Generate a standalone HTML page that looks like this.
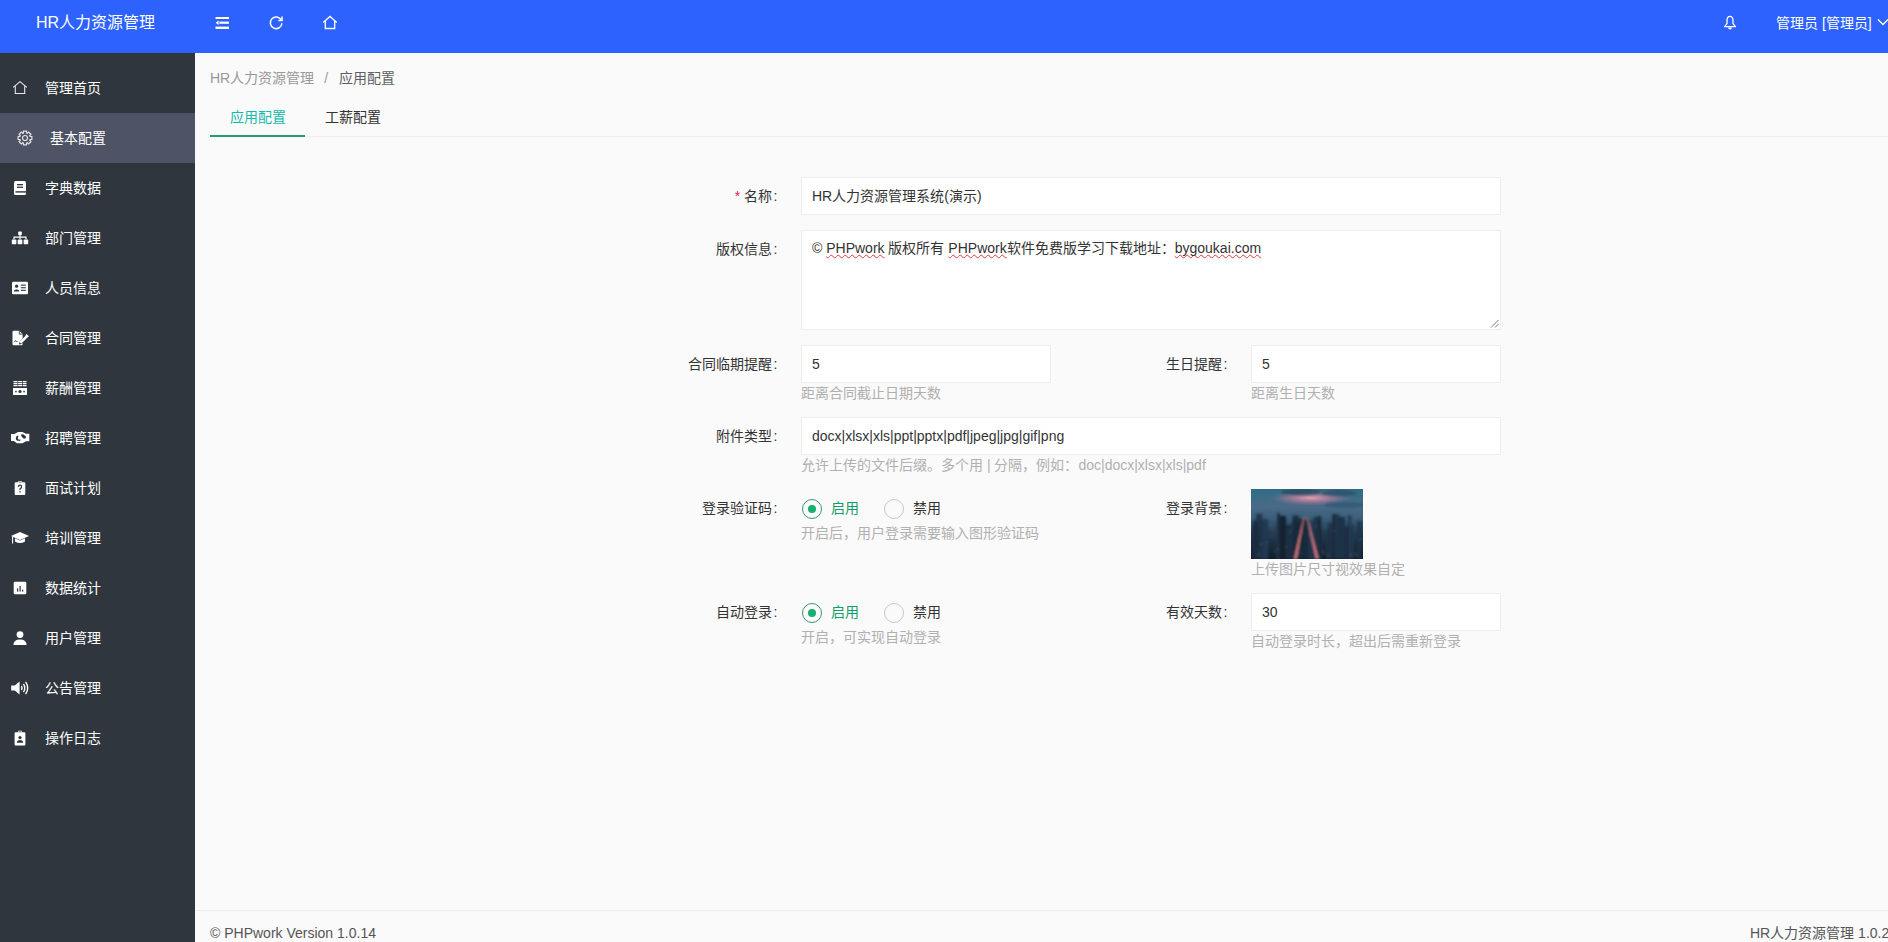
<!DOCTYPE html>
<html lang="zh-CN"><head><meta charset="utf-8">
<style>
*{margin:0;padding:0;box-sizing:border-box}
html,body{width:1888px;height:942px;overflow:hidden;background:#fafafa;font-family:"Liberation Sans",sans-serif;font-size:14px;color:#333}
.abs{position:absolute}
#hdr{position:absolute;left:0;top:0;width:1888px;height:53px;background:#2d62ff}
#logo{position:absolute;left:-2px;top:0;width:195px;height:45px;line-height:45px;text-align:center;color:#fff;font-size:16px}
#side{position:absolute;left:0;top:53px;width:195px;height:889px;background:#2f363e}
.mi{position:absolute;left:0;width:195px;height:50px;line-height:50px;color:#fff;font-size:14px}
.mi .t{position:absolute;left:45px;top:0}
.mi svg{position:absolute;left:10px;top:15px}
.mi.on{background:#4e5366}
.mi.on .t{left:50px}
.mi.on svg{left:15px}
#main{position:absolute;left:195px;top:53px;width:1693px;height:889px;background:#fafafa}
.lbl{position:absolute;text-align:right;width:200px;color:#333;line-height:20px;white-space:nowrap}
.c{display:inline-block;width:14px;text-align:left;padding-left:1.6px;font-style:normal}
.inp{position:absolute;background:#fff;border:1px solid #eee;border-radius:0;line-height:36px;padding-left:10px;color:#333}
.aux{position:absolute;color:#b0b0b0;line-height:20px;white-space:nowrap}
.radio{position:absolute;width:20px;height:20px;border-radius:50%;border:1.5px solid #c6c6c6;margin-top:1px}
.radio.on{border-color:#3e9474}
.radio.on:after{content:"";position:absolute;left:5.2px;top:4.6px;width:8px;height:8px;border-radius:50%;background:#16b070}
.sp{text-decoration:underline wavy #e8393a;text-decoration-thickness:1.4px;text-underline-offset:1px;text-decoration-skip-ink:none}
.rt{position:absolute;line-height:20px;color:#333}
.rt.on{color:#129e68}
</style></head>
<body>
<div id="hdr">
  <div id="logo">HR人力资源管理</div>
  <svg class="abs" style="left:215px;top:16px" width="15" height="14" viewBox="0 0 15 14">
    <rect x="0.5" y="1" width="13.5" height="2" fill="#fff"/>
    <rect x="4.4" y="5.6" width="9.6" height="2.2" fill="#fff"/>
    <path d="M0.6 6.7 L3.6 4.4 L3.6 9Z" fill="#fff"/>
    <rect x="0.5" y="10.6" width="13.5" height="2.4" fill="#fff"/>
  </svg>
  <svg class="abs" style="left:268px;top:15px" width="16" height="16" viewBox="0 0 16 16">
    <path d="M13.3 5.2 A5.8 5.8 0 1 0 13.9 8.2" fill="none" stroke="#fff" stroke-width="1.5"/>
    <path d="M10.4 5.4 L14 5.4 L14 1.6" fill="none" stroke="#fff" stroke-width="1.5"/>
  </svg>
  <svg class="abs" style="left:322px;top:15px" width="16" height="16" viewBox="0 0 16 16">
    <path d="M1.2 7.4 L8 1.4 L14.8 7.4" fill="none" stroke="#fff" stroke-width="1.3"/>
    <path d="M3.3 6 L3.3 13.5 L12.7 13.5 L12.7 6" fill="none" stroke="#fff" stroke-width="1.3"/>
  </svg>
  <svg class="abs" style="left:1722px;top:14px" width="16" height="17" viewBox="0 0 16 17">
    <path d="M8 2.4 C6.1 2.4 5 4.2 5 6.6 L5 9.6 L2.6 12.6 L13.4 12.6 L11 9.6 L11 6.6 C11 4.2 9.9 2.4 8 2.4Z" fill="none" stroke="#fff" stroke-width="1.35" stroke-linejoin="round"/>
    <path d="M6.1 13.5 A1.9 1.9 0 0 0 9.9 13.5Z" fill="#fff"/>
  </svg>
  <div class="abs" style="left:1776px;top:13px;line-height:20px;color:#fff;white-space:nowrap">管理员 [管理员]</div>
  <svg class="abs" style="left:1877px;top:17px" width="12" height="10" viewBox="0 0 12 10">
    <path d="M1 2.5 L6 7.5 L11 2.5" fill="none" stroke="#fff" stroke-width="1.3"/>
  </svg>
</div>

<div id="side">
  <div class="mi" style="top:10px"><svg width="20" height="20" viewBox="0 0 20 20"><path d="M3.2 9.4 L10 3.6 L16.8 9.4 M5.3 7.6 V15.5 H14.7 V7.6" fill="none" stroke="#e6e6e6" stroke-width="1.1"/></svg><span class="t">管理首页</span></div>
  <div class="mi on" style="top:60px"><svg width="20" height="20" viewBox="0 0 20 20"><path d="M15.04 8.36 L16.84 8.50 L16.84 11.50 L15.04 11.64 L14.72 12.41 L15.90 13.77 L13.77 15.90 L12.41 14.72 L11.64 15.04 L11.50 16.84 L8.50 16.84 L8.36 15.04 L7.59 14.72 L6.23 15.90 L4.10 13.77 L5.28 12.41 L4.96 11.64 L3.16 11.50 L3.16 8.50 L4.96 8.36 L5.28 7.59 L4.10 6.23 L6.23 4.10 L7.59 5.28 L8.36 4.96 L8.50 3.16 L11.50 3.16 L11.64 4.96 L12.41 5.28 L13.77 4.10 L15.90 6.23 L14.72 7.59Z" fill="none" stroke="#e0e0e0" stroke-width="1.25"/><circle cx="10" cy="10" r="2.5" fill="none" stroke="#e0e0e0" stroke-width="1.2"/></svg><span class="t">基本配置</span></div>
  <div class="mi" style="top:110px"><svg width="20" height="20" viewBox="0 0 20 20"><rect x="4" y="3" width="12" height="14" rx="1.5" fill="#fff"/><rect x="7" y="6" width="6" height="1.3" fill="#2f363e"/><rect x="7" y="8.6" width="6" height="1.3" fill="#2f363e"/><rect x="5.5" y="13.2" width="10.5" height="1.4" fill="#2f363e"/></svg><span class="t">字典数据</span></div>
  <div class="mi" style="top:160px"><svg width="20" height="20" viewBox="0 0 20 20"><rect x="8.2" y="3.6" width="3.6" height="3.4" rx="0.6" fill="#fff"/><path d="M10 7 V9.2 M4 11.2 V9.2 H16 V11.2 M10 9.2 V11.2" stroke="#fff" stroke-width="1.2" fill="none"/><rect x="1.8" y="11.6" width="4.6" height="4.6" rx="0.8" fill="#fff"/><rect x="7.7" y="11.6" width="4.6" height="4.6" rx="0.8" fill="#fff"/><rect x="13.6" y="11.6" width="4.6" height="4.6" rx="0.8" fill="#fff"/></svg><span class="t">部门管理</span></div>
  <div class="mi" style="top:210px"><svg width="20" height="20" viewBox="0 0 20 20"><rect x="2" y="3.8" width="16" height="12.4" rx="1.2" fill="#fff"/><circle cx="6.6" cy="8.2" r="1.6" fill="#2f363e"/><path d="M3.9 13.4 C4.2 11 9 11 9.3 13.4Z" fill="#2f363e"/><rect x="10.8" y="6.6" width="5" height="1.1" fill="#2f363e"/><rect x="10.8" y="9.2" width="5" height="1.1" fill="#2f363e"/><rect x="10.8" y="11.8" width="5" height="1.1" fill="#2f363e"/></svg><span class="t">人员信息</span></div>
  <div class="mi" style="top:260px"><svg width="20" height="20" viewBox="0 0 20 20"><path d="M2.5 4 Q2.5 2.8 3.7 2.8 L9.3 2.8 L12.6 6.1 L12.6 10.5 L9.5 14 L9 16.5 L11.5 16 L12.6 15 L12.6 16.2 Q12.6 17.3 11.5 17.3 L3.7 17.3 Q2.5 17.3 2.5 16.1Z" fill="#fff"/><path d="M9.3 2.8 V6.1 H12.6" fill="none" stroke="#2f363e" stroke-width="0.9"/><path d="M4.2 14.2 L5.6 12.5 L6.6 14 L7.6 13" fill="none" stroke="#2f363e" stroke-width="0.8"/><path d="M10.3 14.8 L17 8.1" stroke="#fff" stroke-width="2.6"/><path d="M16 6.6 L18.3 8.9" stroke="#fff" stroke-width="1.6"/></svg><span class="t">合同管理</span></div>
  <div class="mi" style="top:310px"><svg width="20" height="20" viewBox="0 0 20 20"><path d="M3.5 3.6 H7.5 M8.2 3.6 H12 M12.7 3.6 H16.5 M3.5 5.6 H7.5 M8.2 5.6 H12 M12.7 5.6 H16.5 M3.5 7.6 H7.5 M8.2 7.6 H12 M12.7 7.6 H16.5" stroke="#fff" stroke-width="1.3"/><rect x="3" y="10" width="14" height="7" fill="#fff"/><circle cx="10" cy="13.5" r="1.6" fill="#2f363e"/><rect x="5.2" y="12.8" width="1.5" height="1.5" fill="#2f363e"/><rect x="13.3" y="12.8" width="1.5" height="1.5" fill="#2f363e"/></svg><span class="t">薪酬管理</span></div>
  <div class="mi" style="top:360px"><svg width="20" height="20" viewBox="0 0 20 20"><path d="M1 6 L4.4 6 L8 4 L12.4 4 L16 5.7 L19.3 5.7 L19.3 13.2 L16 13.2 L12.5 15.2 L7 15.2 L3.8 13 L1 13Z" fill="#fff"/><path d="M7.2 7.4 Q4.6 10.2 6.8 12.6 L9.6 13 L11 11.8 L8.4 11.4 Q7 10.2 8.6 8.4Z" fill="#2f363e"/><path d="M11 6.4 L13.2 6.2 L16 8.4 L15.4 10.8 L13.4 10.4 L11.2 8Z" fill="#2f363e"/></svg><span class="t">招聘管理</span></div>
  <div class="mi" style="top:410px"><svg width="20" height="20" viewBox="0 0 20 20"><path d="M5.8 4.2 H8.3 V3 H11.7 V4.2 H14.2 Q15.3 4.2 15.3 5.3 V16 Q15.3 17.1 14.2 17.1 H5.8 Q4.7 17.1 4.7 16 V5.3 Q4.7 4.2 5.8 4.2Z" fill="#fff"/><rect x="9.2" y="3.6" width="1.6" height="1" fill="#2f363e"/><path d="M8.4 9 Q8.4 7.2 10 7.2 Q11.6 7.2 11.6 8.8 Q11.6 10 10 10.8 V12" fill="none" stroke="#2f363e" stroke-width="1.2"/><rect x="9.4" y="13.2" width="1.3" height="1.3" fill="#2f363e"/></svg><span class="t">面试计划</span></div>
  <div class="mi" style="top:460px"><svg width="20" height="20" viewBox="0 0 20 20"><path d="M1 8 L10 4 L19 8 L10 12Z" fill="#fff"/><path d="M5 10.2 V13.6 Q10 16.6 15 13.6 V10.2 L10 12.4Z" fill="#fff"/><path d="M2.6 8.6 V15.6" stroke="#fff" stroke-width="1.1"/></svg><span class="t">培训管理</span></div>
  <div class="mi" style="top:510px"><svg width="20" height="20" viewBox="0 0 20 20"><rect x="3.7" y="3.7" width="12.6" height="12.6" rx="1.3" fill="#fff"/><rect x="7" y="10.4" width="1.2" height="3.2" fill="#2f363e"/><rect x="9.5" y="8" width="1.2" height="5.6" fill="#2f363e"/><rect x="12" y="11.6" width="1.2" height="2" fill="#2f363e"/></svg><span class="t">数据统计</span></div>
  <div class="mi" style="top:560px"><svg width="20" height="20" viewBox="0 0 20 20"><circle cx="10" cy="6.6" r="3.4" fill="#fff"/><path d="M3.4 17 Q3.4 11.4 10 11.4 Q16.6 11.4 16.6 17Z" fill="#fff"/></svg><span class="t">用户管理</span></div>
  <div class="mi" style="top:610px"><svg width="20" height="20" viewBox="0 0 20 20"><path d="M1.2 7.6 H4.8 L9.6 3.6 V16.4 L4.8 12.4 H1.2Z" fill="#fff"/><path d="M11.4 8 Q12.8 10 11.4 12" fill="none" stroke="#fff" stroke-width="1.4"/><path d="M13.4 5.8 Q16.2 10 13.4 14.2" fill="none" stroke="#fff" stroke-width="1.4"/><path d="M15.6 3.8 Q19.8 10 15.6 16.2" fill="none" stroke="#fff" stroke-width="1.4"/></svg><span class="t">公告管理</span></div>
  <div class="mi" style="top:660px"><svg width="20" height="20" viewBox="0 0 20 20"><path d="M5.8 4.2 H8.3 V2.8 H11.7 V4.2 H14.2 Q15.4 4.2 15.4 5.4 V16.4 Q15.4 17.6 14.2 17.6 H5.8 Q4.6 17.6 4.6 16.4 V5.4 Q4.6 4.2 5.8 4.2Z" fill="#fff"/><rect x="9.2" y="3.4" width="1.6" height="1" fill="#2f363e"/><circle cx="10" cy="9.6" r="1.6" fill="#2f363e"/><path d="M6.8 14.8 Q7 12 10 12 Q13 12 13.2 14.8Z" fill="#2f363e"/></svg><span class="t">操作日志</span></div>
</div>

<!-- main content uses page coordinates -->
<div class="abs" style="left:210px;top:68px;line-height:20px;white-space:nowrap"><span style="color:#999">HR人力资源管理</span><span style="color:#999;margin:0 11px 0 10px">/</span><span style="color:#5f5f5f">应用配置</span></div>
<div class="abs" style="left:210px;top:136px;width:1678px;height:1px;background:#eee"></div>
<div class="abs" style="left:230px;top:107px;line-height:20px;color:#16baaa">应用配置</div>
<div class="abs" style="left:325px;top:107px;line-height:20px;color:#333">工薪配置</div>
<div class="abs" style="left:210px;top:135px;width:95px;height:2px;background:#289c70"></div>

<div class="lbl" style="left:586px;top:186px"><span style="color:#dd2244">*</span> 名称<i class="c">:</i></div>
<div class="inp" style="left:801px;top:177px;width:700px;height:38px">HR人力资源管理系统(演示)</div>

<div class="lbl" style="left:586px;top:239px">版权信息<i class="c">:</i></div>
<div class="inp" style="left:801px;top:230px;width:700px;height:100px;line-height:20px;padding-top:7px">© <u class="sp">PHPwork</u> 版权所有 <u class="sp">PHPwork</u>软件免费版学习下载地址：<u class="sp">bygoukai.com</u><svg style="position:absolute;right:1px;bottom:1px" width="9" height="9" viewBox="0 0 9 9"><path d="M8.5 1 L1 8.5 M8.5 5 L5 8.5" stroke="#777" stroke-width="1"/></svg></div>

<div class="lbl" style="left:586px;top:354px">合同临期提醒<i class="c">:</i></div>
<div class="inp" style="left:801px;top:345px;width:250px;height:38px">5</div>
<div class="aux" style="left:801px;top:383px">距离合同截止日期天数</div>
<div class="lbl" style="left:1036px;top:354px">生日提醒<i class="c">:</i></div>
<div class="inp" style="left:1251px;top:345px;width:250px;height:38px">5</div>
<div class="aux" style="left:1251px;top:383px">距离生日天数</div>

<div class="lbl" style="left:586px;top:426px">附件类型<i class="c">:</i></div>
<div class="inp" style="left:801px;top:417px;width:700px;height:38px">docx|xlsx|xls|ppt|pptx|pdf|jpeg|jpg|gif|png</div>
<div class="aux" style="left:801px;top:455px">允许上传的文件后缀。多个用 | 分隔，例如：doc|docx|xlsx|xls|pdf</div>

<div class="lbl" style="left:586px;top:498px">登录验证码<i class="c">:</i></div>
<div class="radio on" style="left:802px;top:498px"></div><div class="rt on" style="left:831px;top:498px">启用</div>
<div class="radio" style="left:884px;top:498px"></div><div class="rt" style="left:913px;top:498px">禁用</div>
<div class="aux" style="left:801px;top:523px">开启后，用户登录需要输入图形验证码</div>
<div class="lbl" style="left:1036px;top:498px">登录背景<i class="c">:</i></div>
<svg class="abs" style="left:1251px;top:489px" width="112" height="70" viewBox="0 0 112 70">
<defs>
<linearGradient id="sky" x1="0" y1="0" x2="0" y2="1"><stop offset="0" stop-color="#2f6d85"/><stop offset="0.25" stop-color="#4a6a88"/><stop offset="0.42" stop-color="#3a5e7a"/><stop offset="0.65" stop-color="#22394f"/><stop offset="1" stop-color="#101c2a"/></linearGradient>
<radialGradient id="pink" cx="0.5" cy="0.5" r="0.5"><stop offset="0" stop-color="#f0a0b8" stop-opacity="0.95"/><stop offset="0.6" stop-color="#c07896" stop-opacity="0.5"/><stop offset="1" stop-color="#7a6a90" stop-opacity="0"/></radialGradient>
<filter id="bl"><feGaussianBlur stdDeviation="0.8"/></filter>
</defs>
<rect width="112" height="70" fill="url(#sky)"/>
<ellipse cx="60" cy="9" rx="42" ry="8" fill="url(#pink)"/>
<g filter="url(#bl)">
<ellipse cx="50" cy="3" rx="20" ry="3" fill="#27485e" opacity="0.8"/>
<ellipse cx="88" cy="4" rx="18" ry="3" fill="#2a5068" opacity="0.8"/>
<ellipse cx="95" cy="16" rx="22" ry="3" fill="#2e5670" opacity="0.7"/>
<rect x="26.2" y="30.7" width="6.3" height="39.3" fill="#1e3347" opacity="0.85"/><rect x="52.1" y="34.9" width="6.5" height="35.1" fill="#2a4660" opacity="0.85"/><rect x="28.5" y="41.9" width="4.4" height="28.1" fill="#2a4660" opacity="0.85"/><rect x="59.5" y="31.1" width="6.3" height="38.9" fill="#213a50" opacity="0.85"/><rect x="25.5" y="40.7" width="3.9" height="29.3" fill="#2a4660" opacity="0.85"/><rect x="81.5" y="25.2" width="7.0" height="44.8" fill="#1e3347" opacity="0.85"/><rect x="4.7" y="38.8" width="7.7" height="31.2" fill="#18283a" opacity="0.85"/><rect x="52.0" y="39.8" width="7.3" height="30.2" fill="#2a4660" opacity="0.85"/><rect x="43.4" y="32.0" width="7.8" height="38.0" fill="#213a50" opacity="0.85"/><rect x="96.7" y="26.4" width="3.6" height="43.6" fill="#213a50" opacity="0.85"/><rect x="28.4" y="38.0" width="7.0" height="32.0" fill="#18283a" opacity="0.85"/><rect x="46.3" y="34.3" width="8.0" height="35.7" fill="#1e3347" opacity="0.85"/><rect x="64.4" y="40.3" width="6.5" height="29.7" fill="#1b2c3e" opacity="0.85"/><rect x="94.2" y="36.1" width="8.9" height="33.9" fill="#213a50" opacity="0.85"/><rect x="76.8" y="33.8" width="5.0" height="36.2" fill="#1e3347" opacity="0.85"/><rect x="62.6" y="27.8" width="7.3" height="42.2" fill="#1e3347" opacity="0.85"/><rect x="29.4" y="32.7" width="3.7" height="37.3" fill="#2a4660" opacity="0.85"/><rect x="9.7" y="31.4" width="7.8" height="38.6" fill="#213a50" opacity="0.85"/><rect x="2.2" y="31.5" width="5.6" height="38.5" fill="#1b2c3e" opacity="0.85"/><rect x="4.9" y="24.8" width="6.7" height="45.2" fill="#1e3347" opacity="0.85"/><rect x="36.4" y="41.7" width="8.3" height="28.3" fill="#1e3347" opacity="0.85"/><rect x="26.0" y="24.1" width="3.2" height="45.9" fill="#1b2c3e" opacity="0.85"/><rect x="66.0" y="27.6" width="3.2" height="42.4" fill="#2a4660" opacity="0.85"/><rect x="32.1" y="36.4" width="4.6" height="33.6" fill="#18283a" opacity="0.85"/><rect x="34.5" y="40.1" width="8.8" height="29.9" fill="#2a4660" opacity="0.85"/><rect x="41.4" y="31.0" width="8.2" height="39.0" fill="#1e3347" opacity="0.85"/><rect x="74.9" y="41.5" width="3.6" height="28.5" fill="#1e3347" opacity="0.85"/><rect x="29.8" y="36.9" width="6.8" height="33.1" fill="#18283a" opacity="0.85"/><rect x="48.1" y="29.5" width="4.5" height="40.5" fill="#18283a" opacity="0.85"/><rect x="1.3" y="34.4" width="5.5" height="35.6" fill="#1b2c3e" opacity="0.85"/><rect x="41.4" y="26.4" width="6.5" height="43.6" fill="#18283a" opacity="0.85"/><rect x="51.3" y="30.3" width="7.1" height="39.7" fill="#18283a" opacity="0.85"/><rect x="81.2" y="25.1" width="3.1" height="44.9" fill="#1b2c3e" opacity="0.85"/><rect x="106.0" y="32.2" width="4.5" height="37.8" fill="#1e3347" opacity="0.85"/><rect x="66.2" y="27.3" width="4.1" height="42.7" fill="#18283a" opacity="0.85"/><rect x="92.8" y="38.2" width="4.6" height="31.8" fill="#1b2c3e" opacity="0.85"/><rect x="85.0" y="34.2" width="3.2" height="35.8" fill="#213a50" opacity="0.85"/><rect x="34.1" y="38.5" width="4.3" height="31.5" fill="#213a50" opacity="0.85"/><rect x="36.1" y="35.7" width="7.1" height="34.3" fill="#1b2c3e" opacity="0.85"/><rect x="11.2" y="30.0" width="4.9" height="40.0" fill="#213a50" opacity="0.85"/>
<rect x="49.4" y="63.4" width="1.2" height="1" fill="#7f9bb0" opacity="0.6"/><rect x="20.3" y="46.8" width="1.2" height="1" fill="#7f9bb0" opacity="0.6"/><rect x="72.2" y="64.3" width="1.2" height="1" fill="#7f9bb0" opacity="0.6"/><rect x="50.7" y="43.2" width="1.2" height="1" fill="#7f9bb0" opacity="0.6"/><rect x="15.1" y="52.9" width="1.2" height="1" fill="#7f9bb0" opacity="0.6"/><rect x="22.6" y="61.8" width="1.2" height="1" fill="#7f9bb0" opacity="0.6"/><rect x="92.6" y="41.9" width="1.2" height="1" fill="#7f9bb0" opacity="0.6"/><rect x="32.1" y="61.8" width="1.2" height="1" fill="#7f9bb0" opacity="0.6"/><rect x="71.3" y="61.8" width="1.2" height="1" fill="#7f9bb0" opacity="0.6"/><rect x="39.3" y="40.2" width="1.2" height="1" fill="#7f9bb0" opacity="0.6"/><rect x="33.5" y="61.4" width="1.2" height="1" fill="#7f9bb0" opacity="0.6"/><rect x="31.3" y="47.1" width="1.2" height="1" fill="#7f9bb0" opacity="0.6"/><rect x="47.0" y="49.4" width="1.2" height="1" fill="#7f9bb0" opacity="0.6"/><rect x="46.2" y="65.5" width="1.2" height="1" fill="#7f9bb0" opacity="0.6"/><rect x="18.8" y="36.1" width="1.2" height="1" fill="#7f9bb0" opacity="0.6"/><rect x="103.9" y="64.2" width="1.2" height="1" fill="#7f9bb0" opacity="0.6"/><rect x="108.6" y="49.9" width="1.2" height="1" fill="#7f9bb0" opacity="0.6"/><rect x="104.6" y="65.7" width="1.2" height="1" fill="#7f9bb0" opacity="0.6"/><rect x="26.0" y="59.9" width="1.2" height="1" fill="#7f9bb0" opacity="0.6"/><rect x="92.4" y="57.2" width="1.2" height="1" fill="#7f9bb0" opacity="0.6"/><rect x="58.1" y="45.2" width="1.2" height="1" fill="#7f9bb0" opacity="0.6"/><rect x="38.8" y="43.3" width="1.2" height="1" fill="#7f9bb0" opacity="0.6"/><rect x="9.4" y="54.8" width="1.2" height="1" fill="#7f9bb0" opacity="0.6"/><rect x="33.0" y="61.9" width="1.2" height="1" fill="#7f9bb0" opacity="0.6"/><rect x="6.9" y="64.9" width="1.2" height="1" fill="#7f9bb0" opacity="0.6"/><rect x="76.9" y="65.6" width="1.2" height="1" fill="#7f9bb0" opacity="0.6"/><rect x="98.8" y="64.8" width="1.2" height="1" fill="#7f9bb0" opacity="0.6"/><rect x="64.3" y="36.4" width="1.2" height="1" fill="#7f9bb0" opacity="0.6"/><rect x="82.5" y="41.5" width="1.2" height="1" fill="#7f9bb0" opacity="0.6"/><rect x="34.4" y="57.2" width="1.2" height="1" fill="#7f9bb0" opacity="0.6"/>
<path d="M52.6 28 L53.4 28 L46 70 L42.6 70Z" fill="#e07a80" opacity="0.85"/>
<path d="M55.6 28 L56.4 28 L68 70 L64.6 70Z" fill="#e07a80" opacity="0.85"/>
<rect x="29" y="27" width="6" height="43" fill="#132233"/>
<rect x="86" y="28" width="8" height="42" fill="#1d3246"/>
</g>
</svg>
<div class="aux" style="left:1251px;top:559px">上传图片尺寸视效果自定</div>

<div class="lbl" style="left:586px;top:602px">自动登录<i class="c">:</i></div>
<div class="radio on" style="left:802px;top:602px"></div><div class="rt on" style="left:831px;top:602px">启用</div>
<div class="radio" style="left:884px;top:602px"></div><div class="rt" style="left:913px;top:602px">禁用</div>
<div class="aux" style="left:801px;top:627px">开启，可实现自动登录</div>
<div class="lbl" style="left:1036px;top:602px">有效天数<i class="c">:</i></div>
<div class="inp" style="left:1251px;top:593px;width:250px;height:38px">30</div>
<div class="aux" style="left:1251px;top:631px">自动登录时长，超出后需重新登录</div>

<div class="abs" style="left:195px;top:910px;width:1693px;height:1px;background:#eee"></div>
<div class="abs" style="left:210px;top:923px;line-height:20px;color:#555;white-space:nowrap">© PHPwork Version 1.0.14</div>
<div class="abs" style="left:1750px;top:923px;line-height:20px;color:#555;white-space:nowrap">HR人力资源管理 1.0.2</div>
</body></html>
